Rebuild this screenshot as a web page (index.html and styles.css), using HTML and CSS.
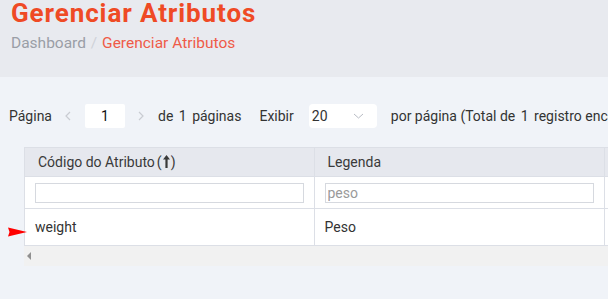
FILE: index.html
```html
<!DOCTYPE html>
<html lang="pt">
<head>
    <meta charset="UTF-8">
    <title>Gerenciar Atributos</title>
    <link rel="stylesheet" href="styles.css">
</head>
<body>
    <div class="page-header">
        <h1 class="page-title">Gerenciar Atributos</h1>
        <div class="breadcrumb">
            <span class="crumb">Dashboard</span>
            <span class="crumb-sep">/</span>
            <span class="crumb-active">Gerenciar Atributos</span>
        </div>
    </div>

    <div class="content">
        <div class="pager">
            <span>Página</span>
            <svg class="chev" width="6" height="10" viewBox="0 0 6 10"><polyline points="5,1 1,5 5,9" fill="none" stroke="#c9ccd2" stroke-width="1.2"/></svg>
            <div class="page-box">1</div>
            <svg class="chev" width="6" height="10" viewBox="0 0 6 10"><polyline points="1,1 5,5 1,9" fill="none" stroke="#c9ccd2" stroke-width="1.2"/></svg>
            <span class="pages-total">de <span class="num">1</span> páginas</span>
            <span class="show-label">Exibir</span>
            <div class="select-box">
                <span>20</span>
                <svg width="11" height="6" viewBox="0 0 11 6"><polyline points="1,1 5.5,5 10,1" fill="none" stroke="#b8bcc4" stroke-width="1"/></svg>
            </div>
            <span class="per-page">por página (Total de <span class="num">1</span> registro encontrado)</span>
        </div>

        <div class="grid-wrap">
            <svg class="pointer" width="19" height="10" viewBox="0 0 19 10"><polygon points="0,0.5 19,5 0,9.5 1.5,5" fill="#f00"/></svg>
            <div class="grid">
                <table>
                    <colgroup>
                        <col class="col-code">
                        <col class="col-label">
                        <col>
                    </colgroup>
                    <tr class="head-row">
                        <th>Código do Atributo<span class="sort">(<svg class="sort-icon" width="7" height="13" viewBox="0 0 7 13"><polygon points="3.5,0 7,4.5 4.6,4.5 4.6,13 2.4,13 2.4,4.5 0,4.5" fill="#3a3a3a"/></svg>)</span></th>
                        <th>Legenda</th>
                        <th></th>
                    </tr>
                    <tr class="filter-row">
                        <td><input type="text" class="filter-input"></td>
                        <td><input type="text" class="filter-input" placeholder="peso"></td>
                        <td></td>
                    </tr>
                    <tr class="data-row">
                        <td>weight</td>
                        <td>Peso</td>
                        <td></td>
                    </tr>
                </table>
            </div>
            <div class="hscroll">
                <svg width="4" height="8" viewBox="0 0 4 8"><polygon points="4,0 0,4 4,8" fill="#909090"/></svg>
            </div>
        </div>
    </div>
</body>
</html>
```

FILE: styles.css
```css
html, body {
    margin: 0;
    padding: 0;
}

body {
    font-family: Roboto, "Liberation Sans", sans-serif;
    background-color: #f0f3f8;
    color: #333333;
    width: 608px;
    height: 299px;
    overflow: hidden;
}

.page-header {
    background-color: #e8eaef;
    height: 77px;
    padding-left: 11px;
    box-sizing: border-box;
}

.page-title {
    margin: 0;
    padding-top: 1px;
    font-size: 26px;
    line-height: 25px;
    font-weight: 700;
    letter-spacing: 0.9px;
    color: #ef4a25;
}

.breadcrumb {
    margin-top: 8px;
    font-size: 15.5px;
    line-height: 18px;
}

.crumb {
    color: #9a9ea6;
}

.crumb-sep {
    color: #cfd2d8;
    margin: 0 1px;
}

.crumb-active {
    color: #ef5b48;
}

.content {
    padding-top: 27px;
}

.pager {
    display: flex;
    align-items: center;
    height: 24px;
    padding-left: 9px;
    font-size: 14px;
    white-space: nowrap;
}

.pager > * {
    flex-shrink: 0;
}

.num {
    margin: 0 2px;
}

.chev {
    margin: 0 14px 0 13px;
}

.page-box {
    width: 40px;
    height: 24px;
    background-color: #ffffff;
    border-radius: 2px;
    display: flex;
    align-items: center;
    justify-content: center;
    color: #111111;
}

.show-label {
    margin-left: 18px;
}

.select-box {
    margin-left: 15px;
    width: 68px;
    height: 24px;
    background-color: #ffffff;
    border-radius: 4px;
    box-sizing: border-box;
    padding: 0 13px 0 3px;
    display: flex;
    align-items: center;
    justify-content: space-between;
}

.per-page {
    margin-left: 14px;
}

.grid-wrap {
    position: relative;
    margin: 19px 0 0 24px;
}

.pointer {
    position: absolute;
    left: -16px;
    top: 80px;
}

.grid {
    overflow: hidden;
    border-left: 1px solid #dcdfe6;
}

table {
    border-collapse: collapse;
    width: 800px;
    table-layout: fixed;
    font-size: 14px;
}

.col-code {
    width: 289px;
}

.col-label {
    width: 290px;
}

th, td {
    border: 1px solid #dcdfe6;
    padding: 0 10px;
    text-align: left;
    font-weight: 400;
}

tr > :first-child {
    border-left: none;
}

.head-row th {
    background-color: #e6e8ee;
    height: 28px;
    padding-left: 13px;
    color: #3a3a3a;
}

.sort {
    margin-left: 2px;
}

.sort-icon {
    margin: 0 1px;
    vertical-align: -1px;
}

.filter-row td {
    background-color: #ffffff;
    height: 31px;
}

.filter-input {
    display: block;
    width: 100%;
    height: 20px;
    box-sizing: border-box;
    border: 1px solid #d6d9df;
    font-family: inherit;
    font-size: 14px;
    padding: 0 2px;
    color: #333333;
}

.filter-input::placeholder {
    color: #9a9a9a;
}

.data-row td {
    background-color: #ffffff;
    height: 36px;
}

.hscroll {
    height: 20px;
    background-color: #f1f1f1;
    display: flex;
    align-items: center;
    padding-left: 3px;
}
```
